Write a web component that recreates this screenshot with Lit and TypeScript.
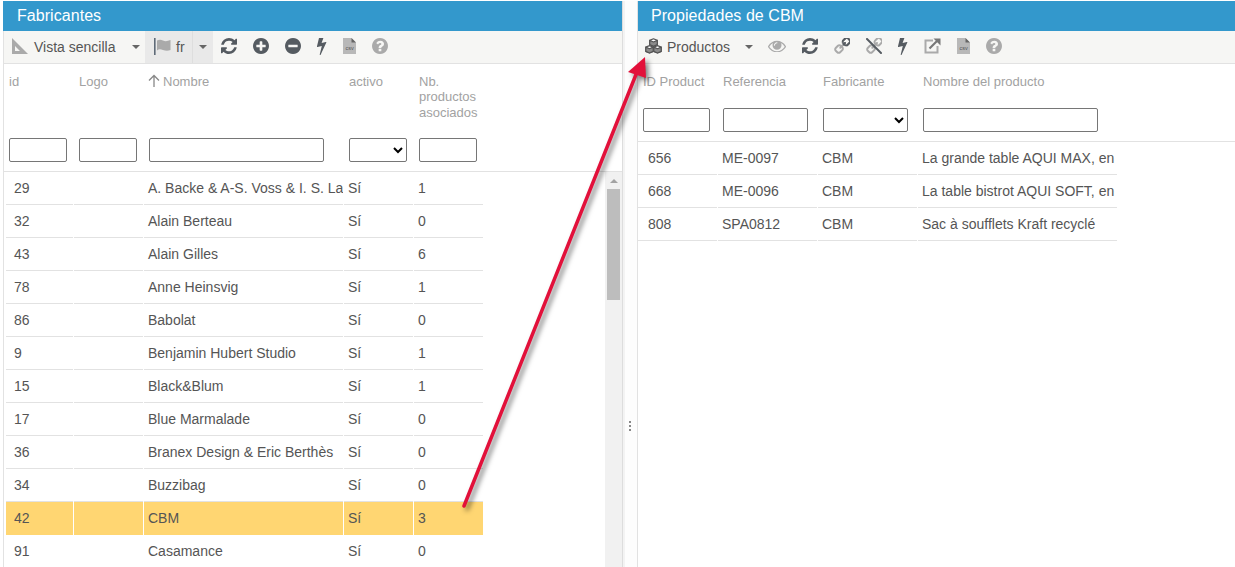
import { LitElement, html, css, svg } from "lit";
import { customElement } from "lit/decorators.js";

const P = {
  refresh: "M1639 1056q0 5-1 7-64 268-268 434.5t-478 166.5q-146 0-282.5-55t-243.5-157l-129 129q-19 19-45 19t-45-19-19-45v-448q0-26 19-45t45-19h448q26 0 45 19t19 45-19 45l-137 137q71 66 161 102t187 36q134 0 250-65t186-179q11-17 53-117 8-23 30-23h192q13 0 22.5 9.5t9.5 22.5zm25-800v448q0 26-19 45t-45 19h-448q-26 0-45-19t-19-45 19-45l138-138q-148-137-349-137-134 0-250 65t-186 179q-11 17-53 117-8 23-30 23h-199q-13 0-22.5-9.5t-9.5-22.5v-7q65-268 270-434.5t480-166.5q146 0 284 55.5t245 156.5l130-129q19-19 45-19t45 19 19 45z",
  plus: "M1344 960v-128q0-26-19-45t-45-19h-256v-256q0-26-19-45t-45-19h-128q-26 0-45 19t-19 45v256h-256q-26 0-45 19t-19 45v128q0 26 19 45t45 19h256v256q0 26 19 45t45 19h128q26 0 45-19t19-45v-256h256q26 0 45-19t19-45zm320-64q0 209-103 385.5t-279.5 279.5-385.5 103-385.5-103-279.5-279.5-103-385.5 103-385.5 279.5-279.5 385.5-103 385.5 103 279.5 279.5 103 385.5z",
  minus: "M1344 960v-128q0-26-19-45t-45-19h-768q-26 0-45 19t-19 45v128q0 26 19 45t45 19h768q26 0 45-19t19-45zm320-64q0 209-103 385.5t-279.5 279.5-385.5 103-385.5-103-279.5-279.5-103-385.5 103-385.5 279.5-279.5 385.5-103 385.5 103 279.5 279.5 103 385.5z",
  bolt: "M1333 566q18 20 7 44l-540 1157q-13 25-42 25-4 0-14-2-17-5-25.5-19t-4.5-30l197-808-406 101q-4 1-12 1-18 0-31-11-18-15-13-39l201-825q4-14 16-23t28-9h328q19 0 32 12.5t13 29.5q0 8-5 18l-171 463 396-98q8-2 12-2 19 0 34 15z",
  help: "M1024 1376v-192q0-14-9-23t-23-9h-192q-14 0-23 9t-9 23v192q0 14 9 23t23 9h192q14 0 23-9t9-23zm256-672q0-88-55.5-163t-138.5-116-170-41q-243 0-371 213-15 24 8 42l132 100q7 6 19 6 16 0 25-12 53-68 86-92 34-24 86-24 48 0 85.5 26t37.5 59q0 38-20 61t-68 45q-63 28-115.5 86.5t-52.5 125.5v36q0 14 9 23t23 9h192q14 0 23-9t9-23q0-19 21.5-49.5t54.5-49.5q32-18 49-28.5t46-35 44.5-48 28-60.5 12.5-81zm384 192q0 209-103 385.5t-279.5 279.5-385.5 103-385.5-103-279.5-279.5-103-385.5 103-385.5 279.5-279.5 385.5-103 385.5 103 279.5 279.5 103 385.5z",
  eye: "M1664 960q-152-236-381-353 61 104 61 225 0 185-131.5 316.5t-316.5 131.5-316.5-131.5-131.5-316.5q0-121 61-225-229 117-381 353 133 205 333.5 326.5t434.5 121.5 434.5-121.5 333.5-326.5zm-720-384q0-20-14-34t-34-14q-125 0-214.5 89.5t-89.5 214.5q0 20 14 34t34 14 34-14 14-34q0-86 61-147t147-61q20 0 34-14t14-34zm848 384q0 34-20 69-140 230-376.5 368.5t-499.5 138.5-499.5-139-376.5-368q-20-35-20-69t20-69q140-229 376.5-368t499.5-139 499.5 139 376.5 368q20 35 20 69z",
  link: "M1456 1216q0-40-28-68l-208-208q-28-28-68-28-42 0-72 32 3 3 19 18.5t21.5 21.5 15 19 13 25.5 3.5 27.5q0 40-28 68t-68 28q-15 0-27.5-3.5t-25.5-13-19-15-21.5-21.5-18.5-19q-33 31-33 73 0 40 28 68l206 207q27 27 68 27 40 0 68-26l147-146q28-28 28-67zm-703-705q0-40-28-68l-206-207q-28-28-68-28-39 0-68 27l-147 146q-28 28-28 67 0 40 28 68l208 208q27 27 68 27 42 0 72-31-3-3-19-18.5t-21.5-21.5-15-19-13-25.5-3.5-27.5q0-40 28-68t68-28q15 0 27.5 3.5t25.5 13 19 15 21.5 21.5 18.5 19q33-31 33-73zm895 705q0 120-85 203l-147 146q-83 83-203 83-121 0-204-85l-206-207q-83-83-83-203 0-123 88-209l-88-88q-86 88-208 88-120 0-204-84l-208-208q-84-84-84-204t85-203l147-146q83-83 203-83 121 0 204 85l206 207q83 83 83 203 0 123-88 209l88 88q86-88 208-88 120 0 204 84l208 208q84 84 84 204z",
};

const fa = (d: string, color: string) =>
  html`<svg width="16" height="16" viewBox="128 128 1536 1536" fill=${color}><path d=${d}></path></svg>`;

const DARK = "#555b61";
const GREY = "#aaaaaa";
const FLIP = "translate(1792 0) scale(-1 1)";

const bolt = () => html`<svg width="10" height="17" viewBox="500 180 860 1610" fill=${DARK}><path d=${P.bolt}></path></svg>`;

const csv = () => html`<svg width="13" height="16" viewBox="0 0 13 16">
  <path d="M0 0H8.500L13 4.500V16H0Z" fill="#b8b8b8"></path>
  <path d="M8.500 0V4.500H13Z" fill="#666"></path>
  <text x="6.500" y="12" font-size="5.500" text-anchor="middle" font-family="Liberation Sans" fill="#555">csv</text>
</svg>`;

const square = () => html`<svg width="16" height="16" viewBox="0 0 16 16">
  <path fill-rule="evenodd" d="M0 0L16 16H0ZM3 8V13H8Z" fill="#aaa"></path>
</svg>`;

const flag = () => html`<svg width="17" height="17" viewBox="0 0 17 17">
  <rect x="0" y="0" width="1.600" height="17" fill="#5f6b78"></rect>
  <path d="M3 2.500Q6 1 9 2.500T16.500 2V12Q13 13.500 9 12T3 12.500Z" fill="#aaa"></path>
</svg>`;

const cubes = () => html`<svg width="17" height="16" viewBox="0 0 17 16">
  <g stroke="#555" stroke-width="1.200" stroke-linejoin="round">
    <path d="M8.500 .8L12.300 2.400V6.600L8.500 8.200L4.700 6.600V2.400Z" fill="#fff"></path>
    <path d="M4.700 2.400L8.500 4L12.300 2.400V6.600L8.500 8.200L4.700 6.600Z" fill="#8c8c8c"></path>
    <path d="M4.500 7.600L8.200 9.100V13.400L4.500 15L.8 13.400V9.100Z" fill="#fff"></path>
    <path d="M.8 9.100L4.500 10.700L8.200 9.100V13.400L4.500 15L.8 13.400Z" fill="#8c8c8c"></path>
    <path d="M12.500 7.600L16.200 9.100V13.400L12.500 15L8.800 13.400V9.100Z" fill="#fff"></path>
    <path d="M8.800 9.100L12.500 10.700L16.200 9.100V13.400L12.500 15L8.800 13.400Z" fill="#8c8c8c"></path>
  </g>
</svg>`;

const link = () => html`<svg width="16" height="16" viewBox="128 128 1536 1536">
  <defs><clipPath id="lk"><path d="M800 128H1664V1000L1000 850Z"></path></clipPath></defs>
  <path d=${P.link} transform=${FLIP} fill=${GREY}></path>
  <g clip-path="url(#lk)"><path d=${P.link} transform=${FLIP} fill=${DARK}></path></g>
</svg>`;

const unlink = () => html`<svg width="16" height="16" viewBox="0 0 16 16">
  <svg width="16" height="16" viewBox="128 128 1536 1536" fill=${GREY}><path d=${P.link} transform=${FLIP}></path></svg>
  <path d="M1 1L15 15" stroke="#555b61" stroke-width="2" stroke-linecap="round"></path>
</svg>`;

const extLink = () => html`<svg width="17" height="16" viewBox="0 0 17 16" fill="none">
  <path d="M9 2.500H1.500V14.500H13.500V8" stroke="#aaa" stroke-width="2"></path>
  <path d="M5.500 10.500L14 2" stroke="#777" stroke-width="2.200"></path>
  <path d="M9.500 .5H16.500V7.500Z" fill="#777"></path>
</svg>`;

const arrowUp = () => html`<svg width="12" height="13" viewBox="0 0 12 13" fill="none" stroke="#888" stroke-width="1.300">
  <path d="M6 13V1.500M1 6.500L6 1.500L11 6.500"></path>
</svg>`;

const LEFT_ROWS = [
  ["29", "A. Backe & A-S. Voss & I. S. La", "Sí", "1"],
  ["32", "Alain Berteau", "Sí", "0"],
  ["43", "Alain Gilles", "Sí", "6"],
  ["78", "Anne Heinsvig", "Sí", "1"],
  ["86", "Babolat", "Sí", "0"],
  ["9", "Benjamin Hubert Studio", "Sí", "1"],
  ["15", "Black&Blum", "Sí", "1"],
  ["17", "Blue Marmalade", "Sí", "0"],
  ["36", "Branex Design & Eric Berthès", "Sí", "0"],
  ["34", "Buzzibag", "Sí", "0"],
  ["42", "CBM", "Sí", "3"],
  ["91", "Casamance", "Sí", "0"],
];

const RIGHT_ROWS = [
  ["656", "ME-0097", "CBM", "La grande table AQUI MAX, en"],
  ["668", "ME-0096", "CBM", "La table bistrot AQUI SOFT, en"],
  ["808", "SPA0812", "CBM", "Sac à soufflets Kraft recyclé"],
];

@customElement("app-root")
export class AppRoot extends LitElement {
  static styles = css`
    :host {
      display: flex;
      position: relative;
      width: 1235px;
      height: 567px;
      overflow: hidden;
      box-sizing: border-box;
      padding: 1px 0 0 3px;
      font-family: "Liberation Sans", Arial, sans-serif;
      font-size: 14px;
      color: #555;
      background: #fff;
    }
    .panel { display: flex; flex-direction: column; box-sizing: border-box; min-width: 0; }
    .left { width: 620px; border-right: 1px solid #ddd; }
    .right { width: 597px; flex: none; }
    .splitter {
      width: 15px; flex: none; box-sizing: border-box;
      background: #fdfdfd;
      border-left: 2px solid #f3f3f3;
      border-right: 1px solid #e2e2e2;
      display: flex; align-items: center; justify-content: center;
      padding: 0 2px 0 0;
    }
    .dots { display: flex; flex-direction: column; gap: 2px; margin-top: 283px; }
    .dots i { width: 2px; height: 2px; background: #888; display: block; }
    .title {
      height: 30px; flex: none; box-sizing: border-box;
      background: #3398cc; color: #fff;
      font-size: 16px; line-height: 30px; letter-spacing: .05px;
    }
    .left .title { padding-left: 14px; }
    .right .title { padding-left: 13px; }
    .toolbar {
      height: 33px; flex: none; box-sizing: border-box;
      background: #f6f6f4;
      border-bottom: 1px solid #e2e2e2;
      display: flex; align-items: center;
    }
    .left .toolbar { border-left: 1px solid #e2e2e2; }
    .tools { display: flex; align-items: center; gap: 16px; margin-bottom: 2px; }
    .tools svg { display: block; }
    .tools.l { margin-left: 8px; }
    .tools.r { margin-left: 15px; }
    .caret { width: 0; height: 0; border: 4px solid transparent; border-top: 4px solid #666; border-bottom: 0; display: block; flex: none; }
    .view { display: flex; align-items: center; height: 100%; padding-left: 8px; width: 141px; box-sizing: border-box; flex: none; }
    .view svg { flex: none; display: block; margin-bottom: 2px; }
    .view .label { margin-left: 6px; color: #555; }
    .view .caret { margin-left: auto; margin-right: 5px; }
    .prod { display: flex; align-items: center; height: 100%; padding-left: 7px; flex: none; }
    .prod svg { display: block; margin-bottom: 2px; }
    .prod .label { margin-left: 5px; }
    .prod .caret { margin-left: 15px; }
    .lang { display: flex; height: 100%; flex: none; background: #e9e9e9; }
    .lang .a { width: 48px; box-sizing: border-box; display: flex; align-items: center; padding-left: 9px; gap: 5px; border-right: 1px solid #dedede; }
    .lang .a svg { display: block; margin-bottom: 2px; }
    .lang .b { width: 20px; display: flex; align-items: center; justify-content: center; }
    .grid { display: grid; column-gap: 1px; }
    .left .grid { grid-template-columns: 69px 69px 199px 69px 69px; }
    .right .grid { grid-template-columns: 79px 99px 99px 199px; }
    .ghead { flex: none; box-sizing: border-box; border-bottom: 1px solid #e2e2e2; }
    .left .ghead { height: 108px; border-left: 1px solid #e2e2e2; }
    .right .ghead { height: 78px; }
    .hc {
      display: flex; flex-direction: column; justify-content: space-between;
      padding: 9.800px 0 9px 5px; box-sizing: border-box; min-width: 0;
      color: #a2a2a2; font-size: 13px; line-height: 15.500px;
    }
    .hc .t { display: flex; align-items: flex-start; }
    .hc .t.multi { display: block; }
    .hc .t svg { margin: 0 3px 0 -1px; flex: none; }
    input, select {
      display: block; height: 24px; box-sizing: border-box; margin: 0;
      border: 1px solid #767676; border-radius: 2px; background: #fff; padding: 0;
      font-family: inherit;
    }
    .w58 { width: 58px; } .w175 { width: 175px; } .w67 { width: 67px; } .w85 { width: 85px; }
    .lbody { flex: 1; display: flex; min-height: 0; overflow: hidden; border-left: 1px solid #e2e2e2; }
    .rows { flex: 1; min-width: 0; overflow: hidden; }
    .left .rows .grid { grid-template-columns: 67px 69px 199px 69px 69px; padding-left: 2px; }
    .left .rows .cell.n { padding-left: 8px; }
    .cell {
      height: 33px; box-sizing: border-box; line-height: 32px;
      border-bottom: 1px solid #e2e2e2;
      white-space: nowrap; overflow: hidden; padding-left: 4px;
    }
    .cell.n { padding-left: 10px; }
    .hl .cell { background: #ffd672; border-bottom-color: transparent; }
    .scroll { width: 17px; flex: none; background: #f1f1f1; display: flex; flex-direction: column; align-items: center; }
    .sup { height: 17px; display: flex; align-items: center; justify-content: center; flex: none; }
    .sup i { width: 0; height: 0; border: 4px solid transparent; border-bottom: 4px solid #a3a3a3; border-top: 0; display: block; }
    .thumb { width: 13px; height: 111px; background: #bdbdbd; flex: none; }
    .rbody { flex: 1; min-height: 0; overflow: hidden; }
    .rbody .grid { width: 479px; }
    .overlay { position: absolute; left: 0; top: 0; pointer-events: none; filter: drop-shadow(3px 3px 2.500px rgba(0,0,0,.5)); }
  `;

  render() {
    return html`
      <section class="panel left">
        <div class="title">Fabricantes</div>
        <div class="toolbar">
          <div class="view">${square()}<span class="label">Vista sencilla</span><i class="caret"></i></div>
          <div class="lang">
            <div class="a">${flag()}<span>fr</span></div>
            <div class="b"><i class="caret"></i></div>
          </div>
          <div class="tools l">
            ${fa(P.refresh, DARK)}${fa(P.plus, DARK)}${fa(P.minus, DARK)}${bolt()}${csv()}${fa(P.help, GREY)}
          </div>
        </div>
        <div class="ghead grid">
          <div class="hc"><div class="t">id</div><input class="w58" /></div>
          <div class="hc"><div class="t">Logo</div><input class="w58" /></div>
          <div class="hc"><div class="t">${arrowUp()}Nombre</div><input class="w175" /></div>
          <div class="hc"><div class="t">activo</div><select class="w58"><option></option></select></div>
          <div class="hc"><div class="t multi">Nb.<br />productos<br />asociados</div><input class="w58" /></div>
        </div>
        <div class="lbody">
          <div class="rows">
            ${LEFT_ROWS.map(
              (r) => html`<div class="grid ${r[0] === "42" ? "hl" : ""}">
                <div class="cell n">${r[0]}</div>
                <div class="cell"></div>
                <div class="cell">${r[1]}</div>
                <div class="cell">${r[2]}</div>
                <div class="cell">${r[3]}</div>
              </div>`
            )}
          </div>
          <div class="scroll">
            <div class="sup"><i></i></div>
            <div class="thumb"></div>
          </div>
        </div>
      </section>
      <div class="splitter"><div class="dots"><i></i><i></i><i></i></div></div>
      <section class="panel right">
        <div class="title">Propiedades de CBM</div>
        <div class="toolbar">
          <div class="prod">${cubes()}<span class="label">Productos</span><i class="caret"></i></div>
          <div class="tools r">
            <svg width="18" height="12" viewBox="0 320 1792 1152" fill=${GREY}><path d=${P.eye}></path></svg>
            ${fa(P.refresh, DARK)}${link()}${unlink()}${bolt()}${extLink()}${csv()}${fa(P.help, GREY)}
          </div>
        </div>
        <div class="ghead grid">
          <div class="hc"><div class="t">ID Product</div><input class="w67" /></div>
          <div class="hc"><div class="t">Referencia</div><input class="w85" /></div>
          <div class="hc"><div class="t">Fabricante</div><select class="w85"><option></option></select></div>
          <div class="hc"><div class="t">Nombre del producto</div><input class="w175" /></div>
        </div>
        <div class="rbody">
          ${RIGHT_ROWS.map(
            (r) => html`<div class="grid">
              <div class="cell n">${r[0]}</div>
              <div class="cell">${r[1]}</div>
              <div class="cell">${r[2]}</div>
              <div class="cell">${r[3]}</div>
            </div>`
          )}
        </div>
      </section>
      <svg class="overlay" width="1235" height="567" viewBox="0 0 1235 567">
        ${svg`<path d="M464 506L637 72" stroke="#e2103a" stroke-width="3.500" stroke-linecap="round" fill="none"></path>
        <path d="M645 57L628 72L646 78Z" fill="#e2103a"></path>`}
      </svg>
    `;
  }
}
